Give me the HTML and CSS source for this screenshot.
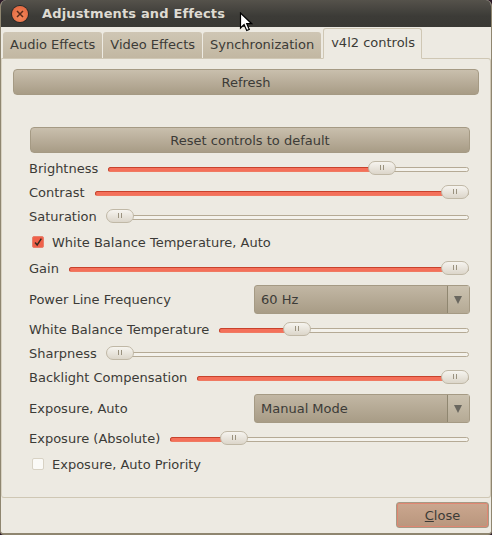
FILE: index.html
```html
<!DOCTYPE html>
<html lang="en">
<head>
  <meta charset="UTF-8">
  <title>Adjustments and Effects</title>
  <link rel="stylesheet" href="styles.css">
</head>
<body>
  <div class="window">
    <header class="titlebar">
      <span class="win-close">
        <svg width="8" height="8" viewBox="0 0 8 8"><path d="M1 1l6 6M7 1L1 7" stroke="#5a2a1a" stroke-width="1.5"/></svg>
      </span>
      <h1>Adjustments and Effects</h1>
    </header>
    <svg class="cursor" width="14" height="20" viewBox="0 0 14 20">
      <path d="M1.500 1v15l3.600-3.400 2.600 5.900 2.600-1.100-2.600-5.700h5z" fill="#fff" stroke="#000" stroke-width="1.2"/>
    </svg>

    <nav class="tabs">
      <span class="tab">Audio Effects</span>
      <span class="tab">Video Effects</span>
      <span class="tab">Synchronization</span>
      <span class="tab active">v4l2 controls</span>
    </nav>

    <main class="panel">
      <button class="btn refresh">Refresh</button>
      <div class="controls">
        <button class="btn reset">Reset controls to default</button>

        <div class="row">
          <label>Brightness</label>
          <div class="slider"><div class="fill" style="width:76%"></div><span class="thumb" style="left:calc(76% - 14px)"></span></div>
        </div>
        <div class="row">
          <label>Contrast</label>
          <div class="slider"><div class="fill" style="width:97%"></div><span class="thumb" style="left:calc(100% - 27px)"></span></div>
        </div>
        <div class="row">
          <label>Saturation</label>
          <div class="slider"><span class="thumb" style="left:-2px"></span></div>
        </div>
        <div class="check-row">
          <span class="check on">
            <svg width="12" height="12" viewBox="0 0 12 12"><path d="M2.500 6.500l2.500 3L10 2" fill="none" stroke="#3a2a20" stroke-width="1.800"/></svg>
          </span>
          <label>White Balance Temperature, Auto</label>
        </div>
        <div class="row">
          <label>Gain</label>
          <div class="slider"><div class="fill" style="width:97%"></div><span class="thumb" style="left:calc(100% - 27px)"></span></div>
        </div>
        <div class="row combo-row">
          <label>Power Line Frequency</label>
          <div class="combo"><span class="combo-text">60 Hz</span><span class="combo-arrow"></span></div>
        </div>
        <div class="row">
          <label>White Balance Temperature</label>
          <div class="slider"><div class="fill" style="width:31%"></div><span class="thumb" style="left:calc(31% - 14px)"></span></div>
        </div>
        <div class="row">
          <label>Sharpness</label>
          <div class="slider"><span class="thumb" style="left:-2px"></span></div>
        </div>
        <div class="row">
          <label>Backlight Compensation</label>
          <div class="slider"><div class="fill" style="width:95%"></div><span class="thumb" style="left:calc(100% - 27px)"></span></div>
        </div>
        <div class="row combo-row">
          <label>Exposure, Auto</label>
          <div class="combo"><span class="combo-text">Manual Mode</span><span class="combo-arrow"></span></div>
        </div>
        <div class="row">
          <label>Exposure (Absolute)</label>
          <div class="slider"><div class="fill" style="width:21%"></div><span class="thumb" style="left:calc(21% - 14px)"></span></div>
        </div>
        <div class="check-row">
          <span class="check"></span>
          <label>Exposure, Auto Priority</label>
        </div>
      </div>
    </main>

    <footer class="actions">
      <button class="btn close"><u>C</u>lose</button>
    </footer>
  </div>
</body>
</html>
```

FILE: styles.css
```css
html, body {
  margin: 0;
  padding: 0;
  background: #2c1a28;
}
.window {
  position: relative;
  box-sizing: border-box;
  width: 492px;
  height: 535px;
  display: flex;
  flex-direction: column;
  background: #edeae2;
  border-left: 1px solid #8f8670;
  border-right: 1px solid #8f8670;
  border-bottom: 2px solid #8f8670;
  border-radius: 6px 6px 4px 4px;
  font-family: "DejaVu Sans", sans-serif;
  font-size: 13px;
  color: #3c3b37;
  overflow: hidden;
}
.titlebar {
  flex: none;
  height: 27px;
  margin: 0 -1px;
  display: flex;
  align-items: center;
  padding-left: 12px;
  background: linear-gradient(to bottom, #55524b, #3c3b37 60%, #3a3934);
}
.titlebar h1 {
  margin: 0 0 0 14px;
  font-size: 13px;
  font-weight: bold;
  letter-spacing: 0.15px;
  color: #dfdbd2;
}
.win-close {
  width: 16px;
  height: 16px;
  border-radius: 50%;
  display: flex;
  align-items: center;
  justify-content: center;
  background: radial-gradient(circle at 50% 65%, #f58a5c, #e0603a);
  box-shadow: 0 0 0 1px #2a2926;
}
.cursor {
  position: absolute;
  left: 238px;
  top: 12px;
}

/* tabs */
.tabs {
  flex: none;
  height: 32px;
  display: flex;
  align-items: flex-end;
  padding-left: 2px;
  gap: 1px;
  margin-bottom: -1px;
  position: relative;
  z-index: 1;
}
.tab {
  box-sizing: border-box;
  height: 26px;
  margin-bottom: 1px;
  padding: 0 7px;
  line-height: 25px;
  background: linear-gradient(to bottom, #cfc6b4, #c2b7a2);
  border-radius: 3px 3px 0 0;
  white-space: nowrap;
}
.tab.active {
  height: 31px;
  margin-bottom: 0;
  margin-left: 1px;
  padding: 0 6px 0 7px;
  line-height: 28px;
  background: #edeae2;
  border: 1px solid #cfc7b4;
  border-bottom: 1px solid #edeae2;
}
.panel {
  flex: none;
  box-sizing: border-box;
  height: 440px;
  padding: 10px 11px 0 11px;
  border: 1px solid #cfc7b4;
  border-left-color: #d8d2c2;
  border-radius: 0 3px 3px 3px;
}

/* buttons */
.btn {
  display: block;
  box-sizing: border-box;
  width: 100%;
  height: 26px;
  padding: 0;
  font: inherit;
  color: #3c3b37;
  background: linear-gradient(to bottom, #c9bfad, #a89c86);
  border: 1px solid #a59a84;
  border-radius: 4px;
}
.controls {
  padding: 32px 9px 0 17px;
}
.reset {
  margin-bottom: 3px;
}

/* rows */
.row {
  box-sizing: border-box;
  height: 24px;
  margin-left: -1px;
  padding-right: 1px;
  display: flex;
  align-items: center;
  gap: 10px;
}
.row label {
  white-space: nowrap;
}
.slider {
  position: relative;
  flex: 1;
  height: 5px;
  margin-top: 2px;
  background: #f4f2ec;
  border: 1px solid #b5aa95;
  border-radius: 3px;
  box-sizing: border-box;
}
.fill {
  height: 100%;
  margin: -1px 0 0 -1px;
  background: #f4705a;
  border: 1px solid #c8422c;
  border-bottom-color: #f07a62;
  border-radius: 3px 0 0 3px;
}
.thumb {
  position: absolute;
  top: -7px;
  width: 28px;
  height: 14px;
  box-sizing: border-box;
  background: linear-gradient(to bottom, #f6f4ef, #dcd6ca);
  border: 1px solid #c0b8a6;
  border-radius: 7px;
}
.thumb::after {
  content: "";
  position: absolute;
  left: 11px;
  top: 3px;
  width: 2px;
  height: 5px;
  border-left: 1px solid #9a927f;
  border-right: 1px solid #9a927f;
}
.check-row {
  height: 28px;
  display: flex;
  align-items: center;
  padding-left: 2px;
  gap: 8px;
}
.check {
  box-sizing: border-box;
  width: 12px;
  height: 12px;
  display: flex;
  align-items: center;
  justify-content: center;
  background: #fbfaf7;
  border: 1px solid #d8d2c4;
  border-radius: 2px;
}
.check.on {
  background: #f0614a;
  border-color: #e8806c;
}
.combo-row {
  height: 37px;
  padding: 2px 0 0;
  justify-content: space-between;
}
.combo {
  box-sizing: border-box;
  flex: none;
  width: 216px;
  height: 29px;
  display: flex;
  background: linear-gradient(to bottom, #c2b7a4, #a89c86);
  border: 1px solid #a59a84;
  border-radius: 3px;
}
.combo-text {
  flex: 1;
  padding-left: 6px;
  line-height: 28px;
}
.combo-arrow {
  position: relative;
  width: 21px;
  border-left: 1px solid #8f8670;
  background: linear-gradient(to bottom, #cbc2b0, #b5aa95);
}
.combo-arrow::after {
  content: "";
  position: absolute;
  left: 6px;
  top: 10px;
  border-left: 4px solid transparent;
  border-right: 4px solid transparent;
  border-top: 8px solid #6a675f;
}

/* footer */
.actions {
  flex: 1;
  display: flex;
  justify-content: flex-end;
  align-items: flex-start;
  padding: 4px 2px 0 0;
}
.close {
  width: 93px;
  height: 26px;
  background: linear-gradient(to bottom, #cba78f, #b9967d);
  border: 1px solid #a59a84;
  box-shadow: inset 0 0 0 1px #e08672;
  border-radius: 3px;
}
```
